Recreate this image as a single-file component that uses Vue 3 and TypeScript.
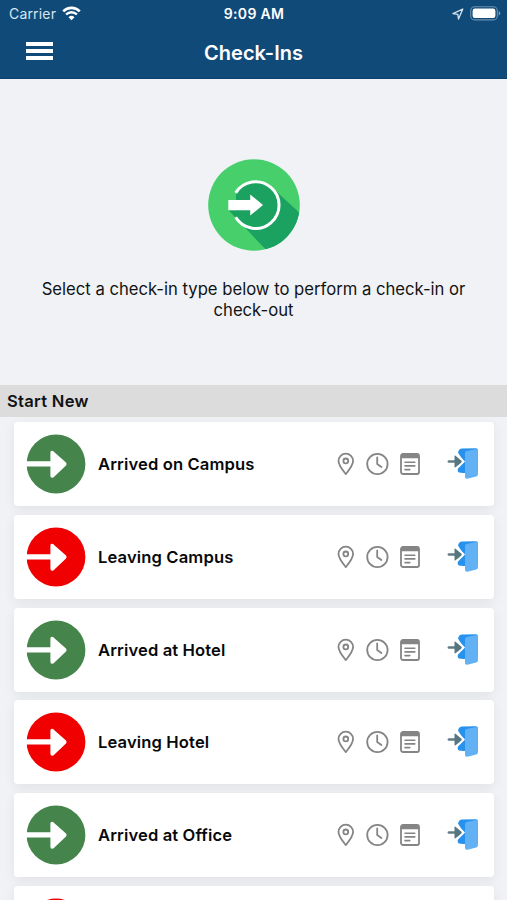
<script setup lang="ts">
interface CheckIn {
  id: number
  label: string
  kind: 'arrive' | 'leave'
}

const checkIns: CheckIn[] = [
  { id: 1, label: 'Arrived on Campus', kind: 'arrive' },
  { id: 2, label: 'Leaving Campus', kind: 'leave' },
  { id: 3, label: 'Arrived at Hotel', kind: 'arrive' },
  { id: 4, label: 'Leaving Hotel', kind: 'leave' },
  { id: 5, label: 'Arrived at Office', kind: 'arrive' },
  { id: 6, label: '', kind: 'leave' },
]
</script>

<template>
  <div class="screen">
    <header class="header">
      <div class="status">
        <div class="carrier">
          <span>Carrier</span>
          <svg class="wifi" width="19" height="15" viewBox="0 0 19 15" fill="none" stroke="#fff">
            <path d="M1.2 5.3a11.8 11.8 0 0 1 16.6 0" stroke-width="2.6" />
            <path d="M4.1 8.5a7.7 7.7 0 0 1 10.8 0" stroke-width="2.4" />
            <path d="M9.5 14.2 6.5 11.2a4.3 4.3 0 0 1 6 0z" fill="#fff" stroke="none" />
          </svg>
        </div>
        <span class="time">9:09 AM</span>
        <div class="indicators">
          <svg width="12" height="12" viewBox="0 0 12 12" fill="none" stroke="#d5e5f2" stroke-width="1.3" stroke-linejoin="round">
            <path d="M10.8 1 1 5.6l4.8.7.7 4.7z" />
          </svg>
          <svg width="31" height="15" viewBox="0 0 31 15">
            <rect x=".7" y=".7" width="26.6" height="13.2" rx="4" fill="none" stroke="#6f90ae" stroke-width="1.1" />
            <rect x="2.6" y="2.6" width="22.8" height="9.4" rx="2.3" fill="#fff" />
            <path d="M28.7 5v4.6q1.6-.7 1.6-2.3T28.7 5z" fill="#7f9db8" />
          </svg>
        </div>
      </div>
      <div class="nav">
        <button class="menu" aria-label="Menu"><i /><i /><i /></button>
        <h1>Check-Ins</h1>
      </div>
    </header>

    <section class="intro">
      <svg width="92" height="92" viewBox="0 0 92 92">
        <defs><clipPath id="disc"><circle cx="46" cy="46" r="45.8" /></clipPath></defs>
        <circle cx="46" cy="46" r="45.8" fill="#47cf6c" />
        <g clip-path="url(#disc)" fill="#1ba261">
          <path d="M20.5 51.3 62 95h32V56L64 28.5 47 22 28 35v16.3z" />
          <path d="M28 34.5A22.6 22.6 0 1 1 28 58z" />
        </g>
        <path d="M27.7 33.9A23.4 23.4 0 1 1 27.7 58.3" fill="none" stroke="#fff" stroke-width="3" />
        <path d="M20.3 41h21.9v-5.6L55 46.1 42.2 56.6v-5.4H20.3z" fill="#fff" />
      </svg>
      <p>Select a check-in type below to perform a check-in or<br>check-out</p>
    </section>

    <h2 class="section-title">Start New</h2>
    <ul class="list">
      <li v-for="item in checkIns" :key="item.id" class="card">
        <svg class="direction" :class="item.kind" width="60" height="60" viewBox="0 0 60 60">
          <circle cx="30" cy="30" r="29.4" fill="currentColor" />
          <path d="M0 27.2h24.4V18.6q0-2.8 2.6-1.6.8.4 1.4 1.2L40 28.6q1.3 1.4 0 2.8L28.4 42.6q-.6.8-1.4 1-2.6.8-2.6-2V32.4H0z" fill="#fff" />
        </svg>
        <span class="label">{{ item.label }}</span>
        <div class="details">
          <svg width="18" height="24" viewBox="0 0 18 24" fill="none" stroke="#858585" stroke-width="1.8">
            <path d="M8.8 22.1C5.9 18.5 1.5 13.2 1.5 9a7.3 7.3 0 0 1 14.6 0c0 4.2-4.4 9.5-7.3 13.1z" stroke-linejoin="round" />
            <circle cx="8.8" cy="8.9" r="2.4" />
          </svg>
          <svg width="24" height="24" viewBox="0 0 24 24" fill="none" stroke="#858585" stroke-width="1.8" stroke-linecap="round">
            <circle cx="12.4" cy="12" r="10.2" />
            <path d="M12.2 5.5V12l4.2 3" stroke-linejoin="round" />
          </svg>
          <svg width="22" height="24" viewBox="0 0 22 24" fill="none" stroke="#858585" stroke-width="1.8" stroke-linecap="round">
            <rect x="2" y="2" width="18" height="20" rx="2" />
            <path d="M1.8 3.8q0-2 2-2h14.4q2 0 2 2v2.5H1.8z" fill="#858585" stroke="none" />
            <path d="M6 10.2h9.8M6 13.9h9.8M6 17.6h4.8" stroke-width="1.6" />
          </svg>
        </div>
        <svg class="door" width="32" height="34" viewBox="0 0 32 34">
          <path d="M11 5.5Q12 1.8 15 1.6l14-.4q1.9 0 1.9 1.8v23H16l-4-.6q-1.3-.4-1.3-2V18l5.2-4.5z" fill="#2792ed" />
          <path d="M18 6q0-1.6 1.6-2l9.8-2.1q1.5-.2 1.5 1.3v24.3q0 1.6-1.6 2l-9.1 2.2Q18 32 18 29.8z" fill="#63b1f5" />
          <path d="m8.5 6.3 8 8.2-8 8" fill="none" stroke="#fff" stroke-width="2.2" />
          <path d="M1.9 14.5h7" stroke="#607d87" stroke-width="2.6" stroke-linecap="round" />
          <path d="M7.5 9.1q0-1 1-.3l5.7 4.8q1 .9 0 1.8l-5.7 4.8q-1 .7-1-.4z" fill="#567680" />
        </svg>
      </li>
    </ul>
  </div>
</template>

<style>
body {
  overflow: hidden;
  background: #f0f2f6;
}
</style>

<style scoped>
.screen {
  width: 100%;
  height: 900px;
  overflow: hidden;
  background: #f0f2f6;
  color: #111214;
  font-family: Inter, sans-serif;
}
.screen * {
  box-sizing: border-box;
}
svg {
  display: block;
  flex: none;
}
.header {
  height: 79px;
  background: #0f4a79;
  border-bottom: 1px solid #0b416f;
  color: #fff;
}
.status {
  display: grid;
  grid-template-columns: 1fr auto 1fr;
  align-items: center;
  height: 27px;
  padding: 0 6px 0 9px;
}
.carrier {
  display: flex;
  gap: 6px;
  color: #d8e6f1;
  font-size: 14px;
  letter-spacing: .17px;
  line-height: 18px;
}
.wifi {
  margin-top: 1px;
}
.time {
  margin-left: -2px;
  font-size: 14px;
  font-weight: 600;
  letter-spacing: .3px;
}
.indicators {
  display: flex;
  gap: 6px;
  align-items: center;
  justify-content: flex-end;
}
.nav {
  display: grid;
  grid-template-columns: 1fr auto 1fr;
  align-items: center;
  height: 51px;
  padding: 0 26px;
}
.menu {
  display: grid;
  gap: 3px;
  width: 27px;
  padding: 0;
  border: 0;
  background: none;
  margin-top: -4px;
}
.menu i {
  height: 4px;
  background: #fff;
}
h1 {
  margin: 0;
  font-size: 20px;
  font-weight: 600;
  letter-spacing: 0;
}
.intro {
  display: flex;
  flex-direction: column;
  align-items: center;
  height: 306px;
  padding-top: 80px;
}
.intro p {
  margin: 28px 0 0;
  font-size: 16.65px;
  line-height: 20.5px;
  text-align: center;
  white-space: nowrap;
}
.section-title {
  height: 32px;
  margin: 0;
  padding-left: 7px;
  background: #dcdcdc;
  font-size: 16.6px;
  font-weight: 600;
  letter-spacing: .28px;
  line-height: 32px;
}
.list {
  display: flex;
  flex-direction: column;
  gap: 8.8px;
  margin: 0;
  padding: 5px 13px 0 14px;
  list-style: none;
}
.card {
  display: flex;
  align-items: center;
  height: 84px;
  flex: none;
  padding: 0 15px 0 12px;
  border-radius: 4px;
  background: #fff;
  box-shadow: 0 3px 12px rgba(0, 0, 0, .07);
}
.arrive {
  color: #45854b;
}
.leave {
  color: #f00000;
}
.label {
  margin-left: 12px;
  flex: 1;
  color: #08090a;
  font-size: 16.6px;
  font-weight: 600;
  letter-spacing: .12px;
  white-space: nowrap;
}
.details {
  display: flex;
  gap: 10px;
}
.door {
  margin-left: 26px;
}
</style>
